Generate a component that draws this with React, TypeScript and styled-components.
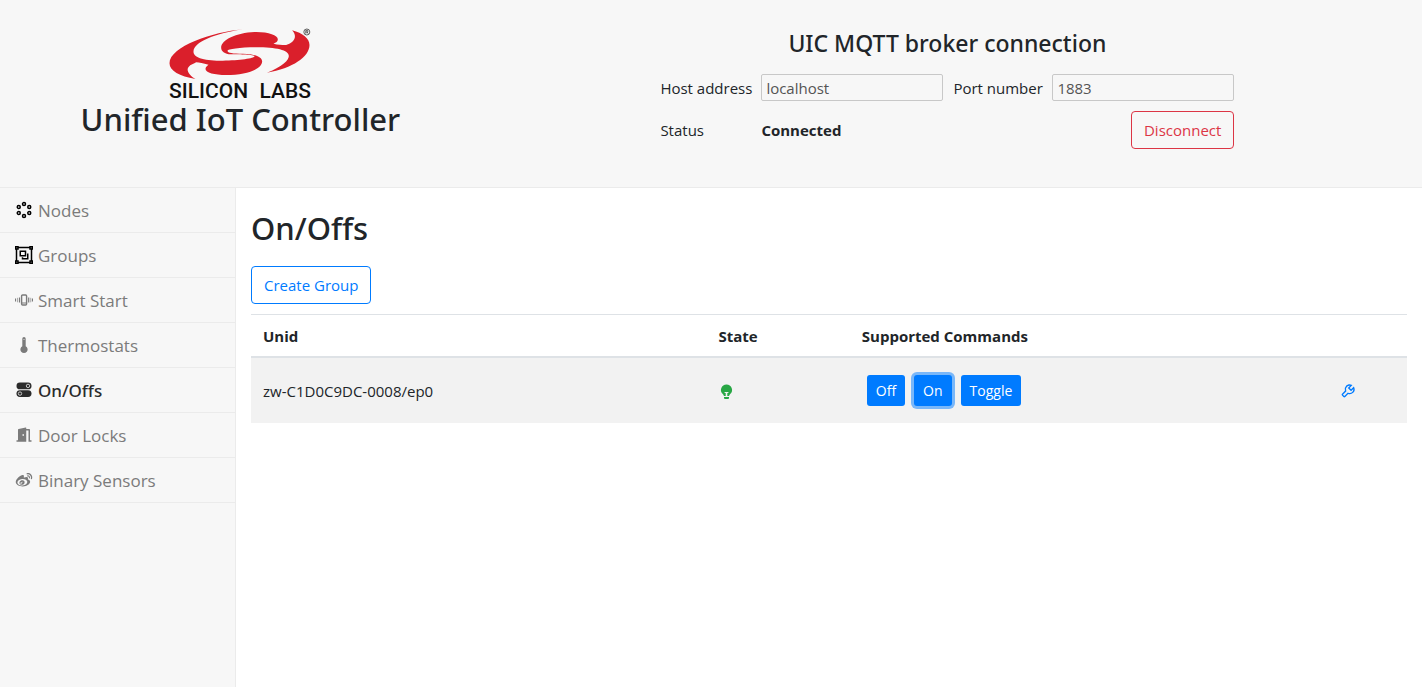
import React from "react";
import styled, { createGlobalStyle, css } from "styled-components";
import { GrNodes, GrObjectGroup } from "react-icons/gr";
import { RiDoorOpenFill, RiWeiboFill } from "react-icons/ri";
import { BiWrench } from "react-icons/bi";

const GlobalStyle = createGlobalStyle`
  *, *::before, *::after { box-sizing: border-box; }
  body {
    margin: 0;
    background: #fff;
    color: #212529;
    font-family: "Segoe UI", "Open Sans", "Noto Sans", sans-serif;
    font-size: 15px;
    line-height: 24px;
  }
  h1, h2, p { margin: 0; }
  button, input { font-family: inherit; }
`;

const Page = styled.div`
  display: flex;
  flex-direction: column;
  min-height: 100vh;
`;

const Header = styled.header`
  display: grid;
  grid-template-columns: 34% 1fr;
  padding: 25px 8px 38px 0;
  background: #f7f7f7;
  border-bottom: 1px solid #ebebeb;
`;

const Brand = styled.div`
  display: flex;
  flex-direction: column;
  align-items: center;
  svg { overflow: visible; }
`;

const Title = styled.h1`
  font-family: "Segoe UI", "Noto Sans", "Open Sans", sans-serif;
  font-size: 31px;
  font-weight: 500;
  line-height: 38px;
`;

const Connection = styled.form`
  display: flex;
  flex-direction: column;
  align-items: center;
  gap: 16px;
  padding-top: 3px;
`;

const ConnectionTitle = styled.h2`
  font-family: "Segoe UI", "Noto Sans", "Open Sans", sans-serif;
  font-size: 23px;
  font-weight: 500;
  line-height: 30px;
`;

const Fields = styled.div`
  display: grid;
  grid-template-columns: 91px 182px 89px 182px;
  column-gap: 10px;
  row-gap: 10px;
  align-items: center;
  white-space: nowrap;
`;

const Field = styled.input`
  width: 100%;
  height: 27px;
  padding: 1px 4px;
  border: 1px solid #c8c8c8;
  border-radius: 2px;
  background: #f7f7f7;
  color: #545454;
  font-size: 15px;
`;

const Status = styled.strong`
  grid-column: span 2;
  font-weight: 700;
`;

const OutlineButton = styled.button<{ $color: string }>`
  justify-self: end;
  height: 38px;
  padding: 0 12px;
  border: 1px solid ${(p) => p.$color};
  border-radius: 4px;
  background: transparent;
  color: ${(p) => p.$color};
  font-size: 15px;
`;

const Body = styled.div`
  display: flex;
  flex: 1;
`;

const Sidebar = styled.nav`
  flex: none;
  width: 236px;
  background: #f7f7f7;
  border-right: 1px solid #ebebeb;
`;

const NavLink = styled.a<{ $active?: boolean }>`
  display: flex;
  align-items: center;
  gap: 5px;
  height: 45px;
  padding: 1px 15px 0;
  border-bottom: 1px solid #ebebeb;
  color: #7b7b7b;
  font-size: 17px;
  text-decoration: none;
  ${(p) =>
    p.$active &&
    css`
      color: #2b2b2b;
      font-family: "Segoe UI", "Noto Sans", "Open Sans", sans-serif;
      font-weight: 500;
    `}
  svg { flex: none; margin-bottom: 2px; }
`;

const Main = styled.main`
  flex: 1;
  padding: 21px 15px;
`;

const PageTitle = styled.h2`
  margin-bottom: 19px;
  font-family: "Segoe UI", "Noto Sans", "Open Sans", sans-serif;
  font-size: 31px;
  font-weight: 500;
  line-height: 38px;
`;

const Table = styled.table`
  width: 100%;
  margin-top: 10px;
  border-collapse: collapse;
  table-layout: fixed;
`;

const HeadCell = styled.th<{ $width?: string }>`
  width: ${(p) => p.$width || "auto"};
  height: 42px;
  padding: 1px 12px 0;
  border-top: 1px solid #dee2e6;
  border-bottom: 2px solid #dee2e6;
  font-weight: 700;
  text-align: left;
`;

const Row = styled.tr`
  background: #f2f2f2;
`;

const Cell = styled.td`
  height: 66px;
  padding: 1px 12px 0;
  svg { display: block; }
`;

const Commands = styled.div`
  display: flex;
  gap: 9px;
  padding-left: 5px;
`;

const CommandButton = styled.button<{ $focused?: boolean }>`
  height: 31px;
  padding: 0 9px;
  border: 0;
  border-radius: 3px;
  background: #007bff;
  color: #fff;
  font-size: 14px;
  box-shadow: ${(p) => (p.$focused ? "0 0 0 3px rgba(0, 123, 255, 0.5)" : "none")};
`;

const IconButton = styled.button`
  display: block;
  padding: 0;
  border: 0;
  background: none;
  color: #007bff;
`;

const Logo = () => (
  <svg width="142" height="75" viewBox="0 0 142 75" role="img" aria-label="Silicon Labs">
    <g transform="translate(-9.500 -5) scale(0.33333)">
      <path
        fill="#da1f2b"
        d="M250 28C160 36 30 80 30 130C30 152 60 170 108 177C90 168 78 150 88 140C92 134 104 131 110 127C120 127 130 130 147 134C142 138 138 141 138 147C138 158 165 165 200 165C260 165 308 148 308 124C308 112 290 102 250 101C220 101 204 99 204 92C205 88 240 82 290 82C350 82 388 90 388 108C388 120 370 140 322 158C400 145 450 110 450 75C450 55 430 40 398 31C400 33 403 38 405 42C410 55 400 70 380 75C375 76 360 75 342 71C350 68 355 65 355 58C355 45 325 35 285 36C230 38 185 60 185 83C185 93 195 102 215 103C240 104 285 104 285 109C285 115 240 122 190 122C140 122 102 115 102 95C102 65 170 40 250 28Z"
      />
      <circle cx="442" cy="36" r="9" fill="none" stroke="#444" strokeWidth="2.5" />
      <path d="M439 41V31H443A2.500 2.500 0 0 1 443 36H439M443 36L446 41" fill="none" stroke="#444" strokeWidth="2.500" />
    </g>
    <g fill="#111" fontFamily="Roboto, sans-serif" fontSize="21" fontWeight="500">
      <text x="0" y="73">SILICON</text>
      <text x="142" y="73" textAnchor="end">LABS</text>
    </g>
  </svg>
);

const SmartStartIcon = () => (
  <svg width="18" height="18" viewBox="0 0 18 18" fill="none" stroke="currentColor">
    <rect x="6.600" y="4" width="5" height="10" rx="1" strokeWidth="1.400" />
    <path d="M7 12h4.500" strokeWidth="1" />
    <path d="M4.500 6.500v5M13.700 6.500v5M.500 7.600v3M17.500 7.600v3" strokeWidth="1.200" />
    <path d="M2.500 6.800v4.500M15.700 6.800v4.500" strokeWidth="1" opacity=".6" />
  </svg>
);

const ThermometerIcon = () => (
  <svg width="18" height="18" viewBox="0 0 18 18" fill="currentColor">
    <path d="M7.300 2.700a1.700 1.700 0 0 1 3.400 0v7.600a3.600 3.600 0 1 1-3.400 0Z" />
    <path d="M8.500 3.500h1" stroke="#f7f7f7" strokeWidth=".8" />
  </svg>
);

const TogglesIcon = () => (
  <svg width="18" height="18" viewBox="0 0 18 18">
    <rect x="1.500" y="1.500" width="15" height="6.800" rx="3.400" fill="currentColor" />
    <rect x="1.500" y="9.200" width="15" height="6.800" rx="3.400" fill="currentColor" />
    <circle cx="13" cy="4.900" r="1.700" fill="none" stroke="#d5d5d5" strokeWidth=".9" />
    <circle cx="5" cy="12.600" r="1.700" fill="none" stroke="#d5d5d5" strokeWidth=".9" />
  </svg>
);

const BulbIcon = () => (
  <svg width="16" height="16" viewBox="-1 -0.5 16 16" fill="#28a745" role="img" aria-label="On">
    <path d="M7.500 1a5.500 5.500 0 0 1 3.700 9.600c-.7.700-1 1.100-1.100 1.900H8.300V9.500h1.100V8.400H5.600v1.100h1.100v3H4.900c-.1-.8-.4-1.200-1.100-1.900A5.500 5.500 0 0 1 7.500 1Z" />
    <path d="M5 13.600h5v.9a1 1 0 0 1-1 1H6a1 1 0 0 1-1-1Z" />
  </svg>
);

const navItems = [
  { label: "Nodes", icon: <GrNodes size={18} color="#000" /> },
  { label: "Groups", icon: <GrObjectGroup size={18} color="#000" /> },
  { label: "Smart Start", icon: <SmartStartIcon /> },
  { label: "Thermostats", icon: <ThermometerIcon /> },
  { label: "On/Offs", icon: <TogglesIcon />, active: true },
  { label: "Door Locks", icon: <RiDoorOpenFill size={18} /> },
  { label: "Binary Sensors", icon: <RiWeiboFill size={18} /> },
];

export default function App() {
  return (
    <Page>
      <GlobalStyle />
      <Header>
        <Brand>
          <Logo />
          <Title>Unified IoT Controller</Title>
        </Brand>
        <Connection onSubmit={(e) => e.preventDefault()}>
          <ConnectionTitle>UIC MQTT broker connection</ConnectionTitle>
          <Fields>
            <label htmlFor="host">Host address</label>
            <Field id="host" defaultValue="localhost" />
            <label htmlFor="port">Port number</label>
            <Field id="port" defaultValue="1883" />
            <span>Status</span>
            <Status>Connected</Status>
            <OutlineButton type="button" $color="#dc3545">Disconnect</OutlineButton>
          </Fields>
        </Connection>
      </Header>
      <Body>
        <Sidebar>
          {navItems.map((item) => (
            <NavLink key={item.label} href="#" $active={item.active}>
              {item.icon}
              {item.label}
            </NavLink>
          ))}
        </Sidebar>
        <Main>
          <PageTitle>On/Offs</PageTitle>
          <OutlineButton type="button" $color="#007bff">Create Group</OutlineButton>
          <Table>
            <thead>
              <tr>
                <HeadCell $width="39.4%">Unid</HeadCell>
                <HeadCell $width="12.4%">State</HeadCell>
                <HeadCell>Supported Commands</HeadCell>
                <HeadCell $width="6.8%" aria-label="Actions" />
              </tr>
            </thead>
            <tbody>
              <Row>
                <Cell>zw-C1D0C9DC-0008/ep0</Cell>
                <Cell><BulbIcon /></Cell>
                <Cell>
                  <Commands>
                    <CommandButton type="button">Off</CommandButton>
                    <CommandButton type="button" $focused>On</CommandButton>
                    <CommandButton type="button">Toggle</CommandButton>
                  </Commands>
                </Cell>
                <Cell>
                  <IconButton type="button" aria-label="Configure"><BiWrench size={16} /></IconButton>
                </Cell>
              </Row>
            </tbody>
          </Table>
        </Main>
      </Body>
    </Page>
  );
}
